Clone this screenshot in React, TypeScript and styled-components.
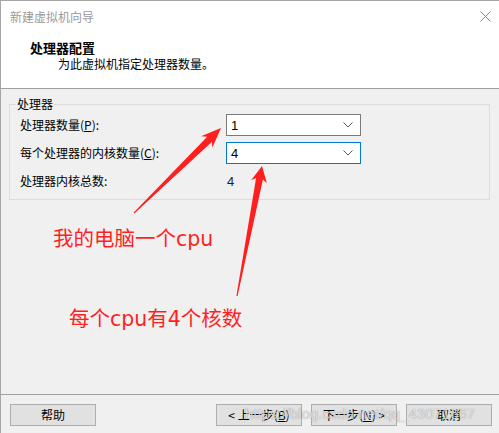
import React from 'react'
import styled, { createGlobalStyle } from 'styled-components'

const GlobalStyle = createGlobalStyle`
    html, body {
        margin: 0;
        padding: 0;
        background: #f0f0f0;
    }

    body {
        font-family: 'Noto Sans CJK SC', 'Noto Sans', sans-serif;
        font-size: 12px;
        color: #000;
    }
`

const Window = styled.div`
    position: relative;
    box-sizing: border-box;
    width: 499px;
    height: 433px;
    border-top: 1px solid #a6a6a6;
    border-left: 1px solid #a6a6a6;
    background: #f0f0f0;
    display: flex;
    flex-direction: column;
    overflow: hidden;
`

const Header = styled.div`
    height: 87px;
    background: #fff;
    border-bottom: 1px solid #a0a0a0;
    display: flex;
    flex-direction: column;
`

const TitleBar = styled.div`
    height: 31px;
    padding: 0 8px 0 9px;
    display: flex;
    align-items: center;
    justify-content: space-between;
    color: #9a9a9a;
    line-height: 16px;
`

const Heading = styled.div`
    margin-top: 8px;
    padding-left: 29px;
    font-size: 13px;
    font-weight: bold;
    line-height: 16px;
`

const SubTitle = styled.div`
    padding-left: 57px;
    line-height: 16px;
`

const Body = styled.div`
    flex: 1;
    padding: 7px 9px 0 8px;
`

const Group = styled.fieldset`
    margin: 0;
    padding: 0 10px 4px 10px;
    border: 1px solid #dcdcdc;
    border-radius: 0;
`

const Legend = styled.legend`
    margin-left: -4px;
    padding: 0 1px;
    line-height: 16px;
`

const Row = styled.div`
    height: 28px;
    display: flex;
    align-items: center;

    &:first-of-type {
        margin-top: -1px;
    }
`

const Label = styled.span`
    width: 206px;
    line-height: 16px;
`

const Select = styled.div<{ $focused?: boolean }>`
    box-sizing: border-box;
    width: 135px;
    height: 22px;
    background: #fff;
    border: 1px solid ${(props) => (props.$focused ? '#0078d7' : '#7a7a7a')};
    padding: 0 7px 0 4px;
    display: flex;
    align-items: center;
    justify-content: space-between;
    font-family: 'Liberation Sans', 'Noto Sans CJK SC', sans-serif;
    font-size: 13px;
`

const Value = styled.span`
    padding-left: 1px;
    font-family: 'Liberation Sans', 'Noto Sans CJK SC', sans-serif;
    font-size: 13px;
    color: #1a1a3a;
`

const Footer = styled.div`
    position: relative;
    height: 39px;
    border-top: 1px solid #a0a0a0;
    padding: 9px 7px 0 9px;
    box-sizing: border-box;
    display: flex;
    align-items: flex-start;
`

const Spacer = styled.div`
    flex: 1;
`

const Button = styled.button`
    box-sizing: border-box;
    width: 86px;
    height: 22px;
    margin: 0;
    padding: 0;
    background: #e1e1e1;
    border: 1px solid #adadad;
    border-radius: 0;
    font-family: 'Noto Sans CJK SC', sans-serif;
    font-size: 12px;
    line-height: 16px;
    color: #000;

    & + & {
        margin-left: 9px;
    }
`

// the blog's watermark, printed over the buttons in the screenshot
const Watermark = styled.span`
    position: absolute;
    left: 244px;
    top: 10px;
    font-family: 'Liberation Sans', sans-serif;
    font-size: 15px;
    line-height: 18px;
    color: rgba(250, 250, 250, 0.75);
    text-shadow: 0 0 1px rgba(0, 0, 0, 0.45);
    white-space: nowrap;
    pointer-events: none;
`

const Annotation = styled.span<{ $x: number; $y: number }>`
    position: absolute;
    left: ${(props) => props.$x}px;
    top: ${(props) => props.$y}px;
    font-family: 'DejaVu Sans', 'Noto Sans CJK SC', sans-serif;
    font-size: 20.5px;
    line-height: 24px;
    color: #ff1f1f;
    white-space: nowrap;
`

const ArrowLayer = styled.svg`
    position: absolute;
    left: 0;
    top: 0;
    pointer-events: none;
`

const Chevron = () => (
    <svg width="10" height="6" viewBox="0 0 10 6">
        <path d="M0.5 0.5 L5 5 L9.5 0.5" fill="none" stroke="#5a5a5a" strokeWidth="1" />
    </svg>
)

const CloseIcon = () => (
    <svg width="11" height="11" viewBox="0 0 11 11">
        <path d="M0.5 0.5 L10.5 10.5 M10.5 0.5 L0.5 10.5" stroke="#8a8a8a" strokeWidth="1" />
    </svg>
)

export default function App() {
    return (
        <>
            <GlobalStyle />
            <Window>
                <Header>
                    <TitleBar>
                        <span>新建虚拟机向导</span>
                        <CloseIcon />
                    </TitleBar>
                    <Heading>处理器配置</Heading>
                    <SubTitle>为此虚拟机指定处理器数量。</SubTitle>
                </Header>

                <Body>
                    <Group>
                        <Legend>处理器</Legend>
                        <Row>
                            <Label>
                                处理器数量(<u>P</u>):
                            </Label>
                            <Select>
                                <span>1</span>
                                <Chevron />
                            </Select>
                        </Row>
                        <Row>
                            <Label>
                                每个处理器的内核数量(<u>C</u>):
                            </Label>
                            <Select $focused>
                                <span>4</span>
                                <Chevron />
                            </Select>
                        </Row>
                        <Row>
                            <Label>处理器内核总数:</Label>
                            <Value>4</Value>
                        </Row>
                    </Group>
                </Body>

                <Footer>
                    <Button>帮助</Button>
                    <Spacer />
                    <Button>
                        &lt; 上一步(<u>B</u>)
                    </Button>
                    <Button>
                        下一步(<u>N</u>) &gt;
                    </Button>
                    <Button>取消</Button>
                    <Watermark>https://blog.csdn.net/qq_43071667</Watermark>
                </Footer>

                <Annotation $x={52} $y={226}>
                    我的电脑一个cpu
                </Annotation>
                <Annotation $x={68} $y={306}>
                    每个cpu有4个核数
                </Annotation>

                <ArrowLayer width="499" height="433" viewBox="0 0 499 433">
                    <polygon
                        fill="#ff1f1f"
                        points="220,127 211.3,146.7 211,140.7 133.3,212.4 132.7,211.6 206.2,135.7 200.1,135.3"
                    />
                    <polygon
                        fill="#ff1f1f"
                        points="261,165 265.9,182.2 261.9,178.5 236.6,295.1 235.4,294.9 255.1,177.1 250.1,179.2"
                    />
                </ArrowLayer>
            </Window>
        </>
    )
}
